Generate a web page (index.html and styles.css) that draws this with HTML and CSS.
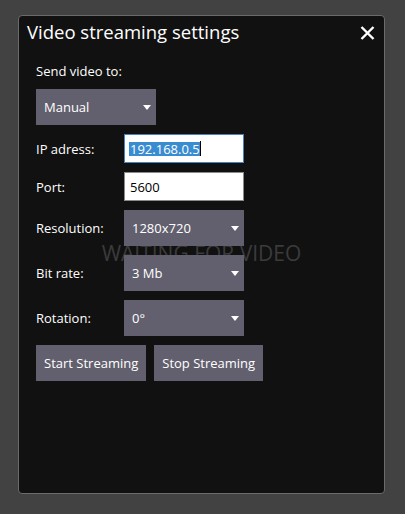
FILE: index.html
```html
<!DOCTYPE html>
<html>
<head>
<meta charset="utf-8">
<link rel="stylesheet" href="styles.css">
</head>
<body>
<div class="panel">
  <div class="waiting">WAITING FOR VIDEO</div>
  <div class="header">
    <div class="title">Video streaming settings</div>
    <svg class="close" width="15" height="14" viewBox="0 0 15 14"><path d="M1.5 1 L13.5 13 M13.5 1 L1.5 13" stroke="#fff" stroke-width="2.4" fill="none"/></svg>
  </div>
  <div class="content">
    <div class="label top">Send video to:</div>
    <div class="select wide"><span>Manual</span><i class="arrow"></i></div>
    <div class="grid">
      <div class="label">IP adress:</div>
      <div class="field focused"><span class="sel">192.168.0.5</span><span class="caret"></span></div>
      <div class="label">Port:</div>
      <div class="field">5600</div>
      <div class="label">Resolution:</div>
      <div class="select"><span>1280x720</span><i class="arrow"></i></div>
      <div class="label">Bit rate:</div>
      <div class="select"><span>3 Mb</span><i class="arrow"></i></div>
      <div class="label">Rotation:</div>
      <div class="select"><span>0°</span><i class="arrow"></i></div>
    </div>
    <div class="buttons">
      <div class="btn">Start Streaming</div>
      <div class="btn">Stop Streaming</div>
    </div>
  </div>
</div>
</body>
</html>
```
FILE: styles.css
```css
html, body {
  margin: 0;
  padding: 0;
  background: #424242;
  font-family: "Open Sans", "Noto Sans", sans-serif;
  color: #fff;
}
.panel {
  position: relative;
  box-sizing: border-box;
  margin: 15px 0 0 18px;
  width: 367px;
  height: 479px;
  border: 1px solid #6b6b6b;
  border-radius: 4px;
  background: #111;
}
.waiting {
  position: absolute;
  left: 0;
  right: 0;
  top: 223px;
  text-align: center;
  font-size: 21px;
  line-height: 28px;
  color: #3b3b3b;
}
.header {
  position: relative;
  display: flex;
  justify-content: space-between;
  align-items: flex-start;
  padding: 4px 9px 0 8px;
}
.title {
  font-size: 18.5px;
  line-height: 24px;
}
.close {
  margin-top: 6px;
}
.content {
  position: relative;
  padding: 17px 0 0 17px;
}
.label {
  font-size: 13px;
  line-height: 20px;
}
.label.top {
  margin-bottom: 8px;
}
.select {
  box-sizing: border-box;
  width: 120px;
  height: 36px;
  background: #62606e;
  display: flex;
  align-items: center;
  justify-content: space-between;
  padding: 0 5px 0 8px;
  font-size: 13px;
}
.arrow {
  width: 0;
  height: 0;
  border-left: 4px solid transparent;
  border-right: 4px solid transparent;
  border-top: 5px solid #fff;
}
.grid {
  display: grid;
  grid-template-columns: 88px 120px;
  row-gap: 9px;
  align-items: center;
  margin-top: 9px;
}
.field {
  box-sizing: border-box;
  height: 29px;
  background: #fff;
  border: 1px solid #8a8a8a;
  color: #000;
  font-size: 13px;
  display: flex;
  align-items: center;
  padding-left: 5px;
}
.field.focused {
  border-color: #4a82c4;
  padding-left: 4px;
}
.sel {
  background: #3a8cd0;
  color: #fff;
  line-height: 14px;
  height: 14px;
  padding-left: 1px;
}
.caret {
  width: 1px;
  height: 15px;
  background: #000;
}
.buttons {
  display: flex;
  gap: 8px;
  margin-top: 9px;
}
.btn {
  height: 36px;
  display: flex;
  align-items: center;
  padding: 0 8px;
  background: #62606e;
  font-size: 13px;
}
```
